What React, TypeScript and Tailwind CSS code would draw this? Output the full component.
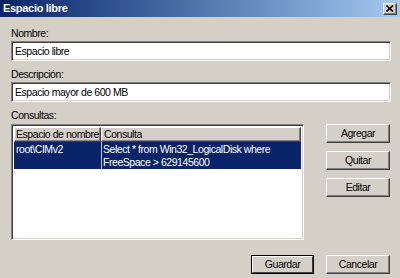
export default function App() {
  const font = { fontFamily: '"Liberation Sans", Arial, sans-serif' };
  return (
    <div
      className="w-[400px] h-[278px] bg-[#d4d0c8] flex flex-col overflow-hidden text-[10.5px] tracking-[-0.45px] leading-[13px] text-black"
      style={font}
    >
      {/* title bar */}
      <div className="h-[17px] flex items-center justify-between bg-gradient-to-r from-[#0a246a] to-[#a6caf0] pl-[3px] pr-[3px]">
        <span className="font-bold text-white text-[11px] tracking-[-0.3px]">Espacio libre</span>
        <div className="w-[14px] h-[12px] bg-[#d4d0c8] border border-t-white border-l-white border-b-[#404040] border-r-[#404040] shadow-[inset_-1px_-1px_0_#808080] flex items-center justify-center">
          <svg width="8" height="7" viewBox="0 0 8 7">
            <path d="M0.5 0.5 L7 6.5 M7 0.5 L0.5 6.5" stroke="#000" strokeWidth="1.6" />
          </svg>
        </div>
      </div>

      <div className="flex flex-col pl-[11px] pr-[9px]">
        {/* Nombre */}
        <div className="mt-[10px] h-[14px]">Nombre:</div>
        <input
          readOnly
          value="Espacio libre"
          className="h-[20px] w-[380px] bg-white border border-t-[#808080] border-l-[#808080] border-b-white border-r-white shadow-[inset_1px_1px_0_#404040,inset_-1px_-1px_0_#d4d0c8] px-[3px] outline-none tracking-[-0.45px]"
          style={font}
        />

        {/* Descripcion */}
        <div className="mt-[7px] h-[14px]">Descripción:</div>
        <input
          readOnly
          value="Espacio mayor de 600 MB"
          className="h-[20px] w-[380px] bg-white border border-t-[#808080] border-l-[#808080] border-b-white border-r-white shadow-[inset_1px_1px_0_#404040,inset_-1px_-1px_0_#d4d0c8] px-[3px] outline-none tracking-[-0.45px]"
          style={font}
        />

        {/* Consultas */}
        <div className="mt-[7px] h-[14px]">Consultas:</div>
        <div className="mt-[1px] flex">
          <div className="w-[293px] h-[116px] bg-white border border-t-[#808080] border-l-[#808080] border-b-white border-r-white shadow-[inset_1px_1px_0_#404040,inset_-1px_-1px_0_#d4d0c8] p-[2px] flex flex-col">
            <div className="flex h-[15px] whitespace-nowrap">
              <div className="w-[87px] bg-[#d4d0c8] border border-t-white border-l-white border-b-[#404040] border-r-[#404040] shadow-[inset_-1px_-1px_0_#808080] pl-[1px] leading-[12px] overflow-hidden">
                Espacio de nombre
              </div>
              <div className="flex-1 bg-[#d4d0c8] border border-t-white border-l-white border-b-[#404040] border-r-[#404040] shadow-[inset_-1px_-1px_0_#808080] pl-[2px] leading-[12px]">
                Consulta
              </div>
            </div>
            <div className="flex h-[27px] text-white whitespace-nowrap">
              <div className="w-[87px] bg-[#0a246a] pl-[2px] pt-[1px]">root\CIMv2</div>
              <div className="w-[1px] bg-[#c0c0c0]" />
              <div className="flex-1 bg-[#0a246a] pl-[1px] pt-[1px]">
                Select * from Win32_LogicalDisk where
                <br />
                FreeSpace &gt; 629145600
              </div>
            </div>
          </div>

          <div className="ml-[22px] flex flex-col gap-[8px]">
            <WinButton label="Agregar" />
            <WinButton label="Quitar" />
            <WinButton label="Editar" />
          </div>
        </div>

        <div className="mt-[15px] flex justify-end gap-[12px] pr-[1px]">
          <WinButton label="Guardar" isDefault />
          <WinButton label="Cancelar" />
        </div>
      </div>
    </div>
  );
}

function WinButton({ label, isDefault }: { label: string; isDefault?: boolean }) {
  if (isDefault) {
    return (
      <div className="w-[63px] h-[19px] border border-black">
        <div className="w-full h-full bg-[#d4d0c8] border border-t-white border-l-white border-b-[#404040] border-r-[#404040] flex items-center justify-center">
          {label}
        </div>
      </div>
    );
  }
  return (
    <div className="w-[64px] h-[19px] bg-[#d4d0c8] border border-t-white border-l-white border-b-[#404040] border-r-[#404040] shadow-[inset_-1px_-1px_0_#808080] flex items-center justify-center">
      {label}
    </div>
  );
}
